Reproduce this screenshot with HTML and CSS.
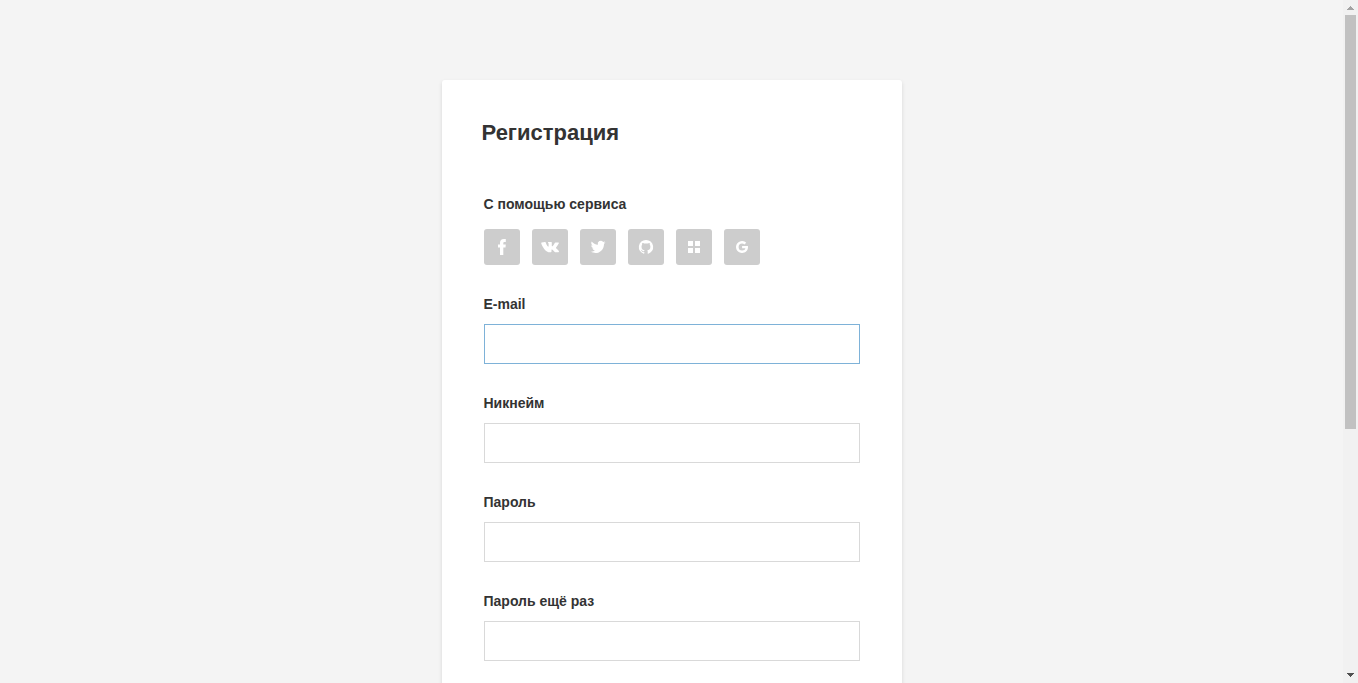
FILE: index.html
```html
<!DOCTYPE html>
<html lang="ru">
<head>
<meta charset="utf-8">
<meta name="viewport" content="width=device-width, initial-scale=1">
<title>Регистрация</title>
<link rel="stylesheet" href="styles.css">
</head>
<body>
<div class="window">
  <main class="page">
    <section class="card">
      <h1 class="card__title">Регистрация</h1>
      <form class="form">
        <div class="field">
          <h2 class="field__label">С помощью сервиса</h2>
          <div class="socials">
            <button class="social" type="button" aria-label="Facebook">
              <svg width="36" height="36" viewBox="0 0 36 36"><path d="M16 26v-7.400h-2v-3h2v-1.700c0-2.600 1.300-3.900 3.900-3.900h1.900v3h-1.200c-.9 0-1.300.3-1.300 1.200v1.400h2.500l-.3 3h-2.200V26z"/></svg>
            </button>
            <button class="social" type="button" aria-label="ВКонтакте">
              <svg width="36" height="36" viewBox="0 0 36 36"><path d="M12.700 13.100c.4 0 .6.100.8.500.9 2.400 2 4.100 2.500 4.100.3 0 .4-.2.400-.9v-2.100c-.1-1-.6-1-.6-1.300 0-.2.200-.3.400-.3h2.900c.4 0 .5.200.5.600v3.100c0 .4.200.5.300.5.300 0 .5-.1.900-.6 1.100-1.200 1.700-2.800 1.700-2.800.1-.300.4-.5.8-.5h2.600c.7 0 .9.300.7.800-.3 1.100-2.700 4.200-2.700 4.200-.3.400-.3.500 0 .8.200.3.900.9 1.400 1.400.8.800 1.300 1.500 1.500 1.900.1.500-.2.800-.7.800h-2.700c-.7 0-.9-.5-2.100-1.600-1-.9-1.400-1.100-1.600-1.100-.4 0-.4.1-.4.600v1.400c0 .4-.2.700-1.400.7-2.100 0-4.300-1.200-5.900-3.400-2.300-3-3-5.300-3-5.900 0-.3.100-.5.500-.5z" transform="translate(.2 0)"/></svg>
            </button>
            <button class="social" type="button" aria-label="Twitter">
              <svg width="36" height="36" viewBox="0 0 36 36"><path d="M25.500 13.400c-.6.300-1.200.400-1.800.5.600-.4 1.100-1 1.300-1.700-.6.400-1.200.6-1.900.7a3 3 0 0 0-5.200 2.800c-2.500-.1-4.700-1.300-6.200-3.200-.8 1.400-.4 3.200.9 4.100-.5 0-1-.1-1.400-.4 0 1.500 1 2.700 2.400 3-.4.1-.9.1-1.300 0 .4 1.200 1.500 2.100 2.800 2.100-1.200 1-2.800 1.500-4.400 1.300 6.400 3.900 13.300-.7 13.300-7.400v-.4c.6-.4 1.100-.900 1.500-1.400z"/></svg>
            </button>
            <button class="social" type="button" aria-label="GitHub">
              <svg width="36" height="36" viewBox="0 0 36 36"><path d="M18 11a7 7 0 0 0-2.200 13.700c.3.100.5-.1.500-.4v-1.200c-2 .4-2.500-.8-2.500-.8-.3-.8-.8-1-.8-1-.6-.5.100-.5.100-.5.700.1 1.100.7 1.100.7.600 1.100 1.600.8 2 .6.100-.4.300-.7.500-.9-1.600-.2-3.200-.8-3.200-3.500 0-.800.200-1.400.7-1.900-.1-.2-.3-.9.100-1.900 0 0 .6-.200 1.900.7 1.200-.3 2.400-.3 3.500 0 1.300-.9 1.900-.7 1.900-.7.400 1 .2 1.700.1 1.900.500.500.7 1.100.7 1.900 0 2.700-1.600 3.300-3.200 3.500.3.200.500.700.500 1.300v1.900c0 .3.200.400.500.3A7 7 0 0 0 18 11z"/></svg>
            </button>
            <button class="social" type="button" aria-label="Microsoft">
              <svg width="36" height="36" viewBox="0 0 36 36"><path d="M12 12h5v5h-5zM19 12h5v5h-5zM12 19h5v5h-5zM19 19h5v5h-5z"/></svg>
            </button>
            <button class="social" type="button" aria-label="Google">
              <svg width="36" height="36" viewBox="0 0 36 36"><path d="M18.100 16.900v2.300h3.300c-.3 1.300-1.500 2.300-3.300 2.300a3.500 3.500 0 1 1 0-7c.9 0 1.700.3 2.300.9l1.800-1.700A6 6 0 1 0 18.100 24c3.500 0 5.900-2.400 5.900-5.900 0-.4 0-.8-.1-1.200z"/></svg>
            </button>
          </div>
        </div>
        <div class="field">
          <label class="field__label" for="email">E-mail</label>
          <input class="field__input field__input--active" id="email" type="email">
        </div>
        <div class="field">
          <label class="field__label" for="nickname">Никнейм</label>
          <input class="field__input" id="nickname" type="text">
        </div>
        <div class="field">
          <label class="field__label" for="password">Пароль</label>
          <input class="field__input" id="password" type="password">
        </div>
        <div class="field">
          <label class="field__label" for="password-repeat">Пароль ещё раз</label>
          <input class="field__input" id="password-repeat" type="password">
        </div>
      </form>
    </section>
  </main>
  <div class="scrollbar" aria-hidden="true">
    <svg class="scrollbar__arrow scrollbar__arrow--up" width="15" height="15" viewBox="0 0 15 15" shape-rendering="crispEdges"><path d="M7 6h1v1H7zM6 7h3v1H6zM5 8h5v1H5zM4 9h7v1H4z"/></svg>
    <div class="scrollbar__track"><div class="scrollbar__thumb"></div></div>
    <svg class="scrollbar__arrow" width="15" height="15" viewBox="0 0 15 15" shape-rendering="crispEdges"><path d="M4 5h7v1H4zM5 6h5v1H5zM6 7h3v1H6zM7 8h1v1H7z"/></svg>
  </div>
</div>
</body>
</html>
```
FILE: styles.css
```css
* {
  box-sizing: border-box;
}

body {
  margin: 0;
  background: #f4f4f4;
  color: #333;
  font-family: "Liberation Sans", Arial, sans-serif;
  font-size: 14px;
  line-height: 20px;
}

.window {
  display: flex;
  height: 100vh;
  overflow: hidden;
}

.page {
  flex: 1;
  padding-top: 80px;
}

.card {
  max-width: 460px;
  min-height: 100%;
  margin: 0 auto;
  padding: 40px;
  background: #fff;
  border-radius: 3px;
  box-shadow: 0 2px 4px rgba(0, 0, 0, 0.12);
}

.card__title {
  margin: 0 0 48px;
  font-size: 22px;
  line-height: 26px;
}

.form {
  display: flex;
  flex-direction: column;
  gap: 29px;
  padding: 0 2px;
}

.field {
  display: flex;
  flex-direction: column;
  gap: 10px;
}

.field__label {
  margin: 0;
  font-size: 14px;
  font-weight: bold;
  line-height: 20px;
}

.field__input {
  width: 100%;
  height: 40px;
  padding: 0 12px;
  border: 1px solid #d9d9d9;
  border-radius: 0;
  background: #fff;
  color: inherit;
  font: inherit;
  outline: none;
}

.field__input--active,
.field__input:focus {
  border-color: #7eb2d8;
}

.socials {
  display: flex;
  gap: 12px;
  padding: 5px 0 0;
}

.social {
  width: 36px;
  height: 36px;
  padding: 0;
  border: 0;
  border-radius: 3px;
  background: #cdcdcd;
  cursor: pointer;
}

.social svg {
  display: block;
  fill: #fff;
}

.scrollbar {
  display: flex;
  flex-direction: column;
  width: 15px;
  background: #f1f1f1;
}

.scrollbar__arrow {
  flex: none;
  fill: #505050;
}

.scrollbar__arrow--up {
  fill: #a3a3a3;
}

.scrollbar__track {
  flex: 1;
  padding: 0 2px;
}

.scrollbar__thumb {
  height: 63.4%;
  background: #c1c1c1;
}
```
